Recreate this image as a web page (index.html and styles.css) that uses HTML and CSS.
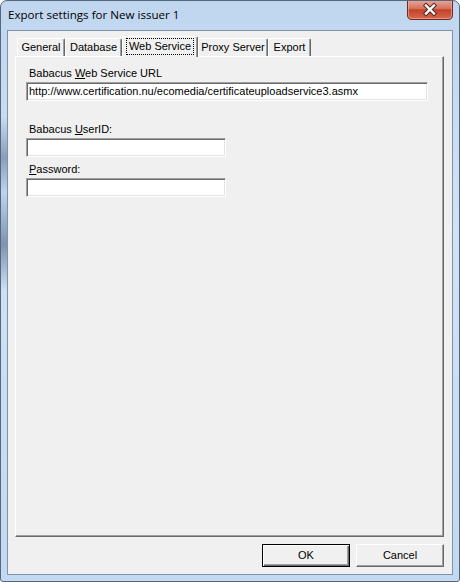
FILE: index.html
```html
<!DOCTYPE html>
<html lang="en">
<head>
  <meta charset="UTF-8">
  <title>Export settings for New issuer 1</title>
  <link rel="stylesheet" href="styles.css">
</head>
<body>
  <div class="window">
    <div class="titlebar">
      <span class="title">Export settings for New issuer 1</span>
      <div class="close">
        <svg width="46" height="20" viewBox="0 0 46 20">
          <defs>
            <linearGradient id="red" x1="0" y1="0" x2="0" y2="1">
              <stop offset="0" stop-color="#e9a99a"/>
              <stop offset="0.45" stop-color="#d4705c"/>
              <stop offset="0.5" stop-color="#c4412a"/>
              <stop offset="1" stop-color="#d86a4f"/>
            </linearGradient>
          </defs>
          <path d="M0.5 0 V15 Q0.5 19.5 5 19.5 H41 Q45.5 19.5 45.5 15 V0" fill="url(#red)" stroke="#6e2a20"/>
          <path d="M1.5 0 V15 Q1.5 18.5 5 18.5 H41 Q44.5 18.5 44.5 15 V0" fill="none" stroke="#f1b7a8" stroke-opacity="0.6"/>
          <path d="M19 5.5 L27 13.5 M27 5.5 L19 13.5" stroke="#4a2a28" stroke-width="4.4" stroke-linecap="square"/>
          <path d="M19 5.5 L27 13.5 M27 5.5 L19 13.5" stroke="#ffffff" stroke-width="2.4" stroke-linecap="square"/>
        </svg>
      </div>
    </div>

    <div class="client">
      <div class="tabs">
        <div class="tab tab-general">General</div>
        <div class="tab tab-database">Database</div>
        <div class="tab tab-web active"><span class="focus">Web Service</span></div>
        <div class="tab tab-proxy">Proxy Server</div>
        <div class="tab tab-export">Export</div>
      </div>

      <div class="panel">
        <label class="label">Babacus <u>W</u>eb Service URL</label>
        <div class="input wide">http://www.certification.nu/ecomedia/certificateuploadservice3.asmx</div>

        <label class="label gap-big">Babacus <u>U</u>serID:</label>
        <div class="input short"></div>

        <label class="label gap-small"><u>P</u>assword:</label>
        <div class="input short"></div>
      </div>

      <div class="buttons">
        <div class="btn default">OK</div>
        <div class="btn">Cancel</div>
      </div>
    </div>
  </div>
</body>
</html>
```

FILE: styles.css
```css
body{
  margin:0;
  background:#ffffff;
}

.window{
  width:460px;
  height:582px;
  box-sizing:border-box;
  border:1px solid #55677c;
  border-radius:7px 7px 3px 3px;
  background:
    linear-gradient(to bottom, rgba(0,0,0,0) 20%, rgba(80,105,140,0.55) 27%, rgba(150,185,225,0.3) 33%, rgba(70,95,130,0.6) 42%, rgba(0,0,0,0) 50%) no-repeat 0 0 / 6px 100%,
    linear-gradient(to bottom, #c0d6ef 0%, #d0e2f5 40%, #c3d9f1 100%);
  display:flex;
  flex-direction:column;
  font-family:"Liberation Sans", Arial, sans-serif;
  font-size:11px;
  color:#000;
  overflow:hidden;
}

.titlebar{
  height:29px;
  display:flex;
  justify-content:space-between;
  align-items:flex-start;
  padding-left:7px;
}
.title{
  font-family:"Open Sans", "Noto Sans", sans-serif;
  font-size:11.6px;
  line-height:16px;
  margin-top:6px;
  color:#000;
}
.close{
  width:46px;
  height:20px;
  margin-top:-1px;
  margin-right:6px;
}
.close svg{
  display:block;
}

.client{
  flex:1;
  margin:0 6px 6px 6px;
  border:1px solid #7f93a9;
  background:#f0f0f0;
  display:flex;
  flex-direction:column;
  padding:5px 8px 7px 7px;
}

.tabs{
  display:flex;
  align-items:flex-end;
  height:20px;
  padding-left:2px;
  position:relative;
  z-index:1;
}
.tab{
  box-sizing:border-box;
  height:18px;
  border-top:1px solid #ffffff;
  border-left:1px solid #ffffff;
  border-right:1px solid #696969;
  box-shadow:inset -1px 0 #a0a0a0;
  border-radius:2px 2px 0 0;
  text-align:center;
  line-height:17px;
  background:#f0f0f0;
}
.tab-general{ width:48px; }
.tab-database{ width:57px; }
.tab-web{ width:76px; }
.tab-proxy{ width:70px; }
.tab-export{ width:43px; }

.tab.active{
  height:21px;
  margin-bottom:-1px;
  padding-top:1px;
  line-height:15px;
}
.focus{
  display:inline-block;
  border:1px dotted #000;
  padding:0 2px;
  line-height:15px;
}

.panel{
  flex:1;
  border-top:1px solid #ffffff;
  border-left:1px solid #ffffff;
  border-right:1px solid #696969;
  border-bottom:1px solid #696969;
  box-shadow:inset -1px -1px #a0a0a0;
  padding:9px 0 0 10px;
  display:flex;
  flex-direction:column;
  align-items:flex-start;
}

.label{
  line-height:14px;
  padding-left:3px;
  margin-bottom:2px;
}
.gap-big{ margin-top:21px; }
.gap-small{ margin-top:5px; }

.input{
  box-sizing:border-box;
  height:19px;
  background:#ffffff;
  border-top:1px solid #a0a0a0;
  border-left:1px solid #a0a0a0;
  border-right:1px solid #ffffff;
  border-bottom:1px solid #ffffff;
  box-shadow:inset 1px 1px #696969, inset -1px -1px #e3e3e3;
  padding:0 2px;
  line-height:17px;
  white-space:nowrap;
  overflow:hidden;
}
.wide{ width:402px; }
.short{ width:200px; }

.buttons{
  display:flex;
  justify-content:flex-end;
  gap:6px;
  margin-top:7px;
}
.btn{
  box-sizing:border-box;
  width:88px;
  height:23px;
  border-top:1px solid #ffffff;
  border-left:1px solid #ffffff;
  border-right:1px solid #696969;
  border-bottom:1px solid #696969;
  box-shadow:inset -1px -1px #a0a0a0;
  text-align:center;
  line-height:21px;
  background:#f0f0f0;
}
.btn.default{
  border:1px solid #000;
  box-shadow:inset 1px 1px #ffffff, inset -1px -1px #696969, inset -2px -2px #a0a0a0;
}
```
